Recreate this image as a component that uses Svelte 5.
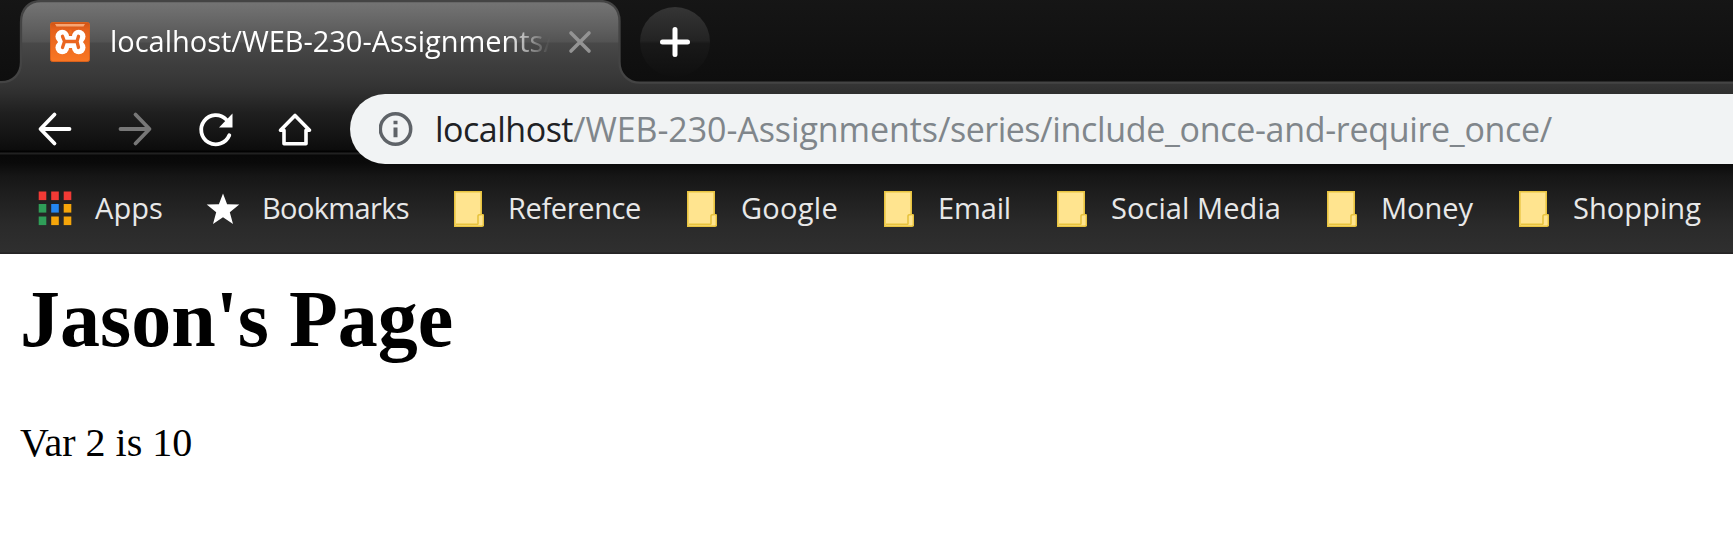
<script>
  const bookmarks = [
    { label: 'Reference', width: 133 },
    { label: 'Google', width: 97 },
    { label: 'Email', width: 73 },
    { label: 'Social Media', width: 170 },
    { label: 'Money', width: 92 },
    { label: 'Shopping', width: 128 },
  ];

  const path = [
    { text: '/WEB-230-Assignments', width: 365 },
    { text: '/series', width: 102 },
    { text: '/include_once-and-require_once/', width: 512 },
  ];

  const squares = ['#f23a35', '#f23a35', '#f23a35', '#2f9e58', '#2486f0', '#f5a50a', '#2f9e58', '#f5a50a', '#f5a50a'];

  // Tracks a label so that it fills the given width.
  function fit(node, width) {
    const natural = node.getBoundingClientRect().width;
    node.style.letterSpacing = `${(width - natural) / node.textContent.length}px`;
  }
</script>

<div class="window">
  <header class="chrome">
    <div class="strip">
      <svg class="strip-shape" width="1733" height="85" viewBox="0 0 1733 85" aria-hidden="true">
        <defs>
          <linearGradient id="dark" x1="0" y1="0" x2="0" y2="1">
            <stop offset="0" stop-color="#161616" />
            <stop offset="1" stop-color="#0e0e0e" />
          </linearGradient>
        </defs>
        <path d="M-4-4V82.200H1C13 82.200 21 74 21 62V22C21 9 29 1 41 1H600C612 1 619.500 9 619.500 21V62C619.500 74 628 82.700 640 82.700H1740V-4Z" fill="url(#dark)" stroke="#444" stroke-width="2.300" />
      </svg>
      <div class="tab">
        <svg class="favicon" width="40" height="40" viewBox="0 0 40 40">
          <defs>
            <linearGradient id="orange" x1="0" y1="0" x2="0" y2="1">
              <stop offset="0" stop-color="#cf5416" />
              <stop offset=".18" stop-color="#e5611c" />
              <stop offset="1" stop-color="#f97724" />
            </linearGradient>
          </defs>
          <rect x=".5" y=".5" width="39" height="39" rx="2" fill="url(#orange)" stroke="#d9611c" />
          <path d="M5 2H35L33.500 4.500H6.500Z" fill="#f7a673" />
          <g fill="#fff">
            <circle cx="12.300" cy="14.500" r="6.800" />
            <circle cx="28.700" cy="14.500" r="6.800" />
            <circle cx="12.300" cy="25.500" r="6.800" />
            <circle cx="28.700" cy="25.500" r="6.800" />
            <path d="M8 14H33V26H8Z" />
          </g>
          <path d="M12.500 14.300L14.500 19.500L12.500 25.500M14.500 19.500H27M28.500 14.300L27 19.500L28.500 25.500" fill="none" stroke="#ea6620" stroke-width="3.300" stroke-linecap="round" stroke-linejoin="round" />
          <path d="M20.500 27.500V31M20.500 9V11.500" stroke="#f07023" stroke-width="2.600" stroke-linecap="round" />
        </svg>
        <div class="title"><span use:fit={444}>localhost/WEB-230-Assignments/</span></div>
        <svg class="close" width="24" height="24" viewBox="0 0 24 24"><path d="M3 3L21 21M21 3L3 21" stroke="#939393" stroke-width="3.600" stroke-linecap="round" /></svg>
      </div>
      <div class="new-tab">
        <svg width="34" height="34" viewBox="0 0 34 34"><path d="M17 4.500V29.500M4.500 17H29.500" stroke="#fff" stroke-width="5" stroke-linecap="round" /></svg>
      </div>
    </div>

    <div class="toolbar">
      <nav class="nav">
        <svg width="40" height="40" viewBox="0 0 40 40"><path d="M19.500 5.500L5.500 20L19.500 34.500M6 20H34.500" class="line" /></svg>
        <svg width="40" height="40" viewBox="0 0 40 40"><path d="M20.500 5.500L34.500 20L20.500 34.500M34 20H5.500" class="line faded" /></svg>
        <svg width="40" height="40" viewBox="0 0 40 40">
          <path d="M34.300 26.300A14.600 14.600 0 1 1 31.200 10.500" class="line" />
          <path d="M37.500 4.500V18.500H24Z" fill="#fff" />
        </svg>
        <svg width="40" height="40" viewBox="0 0 40 40"><path d="M20 6.500L5.500 21.300H9V34.700H31V21.300H34.500Z" fill="none" stroke="#fff" stroke-width="3.600" stroke-linejoin="round" /></svg>
      </nav>
      <div class="omnibox">
        <svg class="info" width="34" height="34" viewBox="0 0 34 34">
          <circle cx="16.500" cy="17" r="15.200" fill="none" stroke="#5f6368" stroke-width="3.500" />
          <path d="M16.500 15.400V25.300M16.500 8.700V12.300" stroke="#5f6368" stroke-width="4" />
        </svg>
        <div class="url"><span class="host" use:fit={138}>localhost</span>{#each path as part}<span use:fit={part.width}>{part.text}</span>{/each}</div>
      </div>
    </div>

    <nav class="bookmarks">
      <div class="item apps">
        <svg width="34" height="36" viewBox="0 0 34 36">
          {#each squares as color, i}
            <rect x={0.7 + (i % 3) * 12.5} y={0.5 + Math.floor(i / 3) * 12.5} width="7.600" height="8.600" fill={color} />
          {/each}
        </svg>
        <span use:fit={68}>Apps</span>
      </div>
      <div class="item starred">
        <svg width="34" height="36" viewBox="0 0 34 36"><path d="M17 2.400L21.100 13.300L33.300 13.600L23.800 21.200L27 33L17 26.300L7 33L10.200 21.200L.7 13.600L12.900 13.300Z" fill="#fff" /></svg>
        <span use:fit={147}>Bookmarks</span>
      </div>
      {#each bookmarks as { label, width }}
        <div class="item">
          <svg width="30" height="36" viewBox="0 0 30 36">
            <path d="M.8.8H27.200V23.500H28Q29.400 23.500 29.400 25V33.500Q29.400 35.200 27.700 35.200H.8Z" fill="#ffe48f" stroke="#e8c33f" stroke-width="1.600" />
            <path d="M24 33.500V25Q24 23.500 27.200 23.500M2 33.200H24" fill="none" stroke="#e8c33f" stroke-width="1.600" />
          </svg>
          <span use:fit={width}>{label}</span>
        </div>
      {/each}
    </nav>
  </header>

  <main>
    <h1>Jason's Page</h1>
    <p>Var 2 is 10</p>
  </main>
</div>

<style>
  :global(body) { background: #fff; overflow: hidden; }
  .window { width: 1733px; height: 555px; overflow: hidden; background: #fff; }
  .chrome {
    height: 254px;
    background: linear-gradient(#747474 0, #727272 5px, #5f5f5f 29px, #535353 42px, #484848 43px, #3d3d3d 66px, #373737 80px, #303030 92px, #202020 112px, #131313 137px, #0c0c0c 150px, #010101 151px, #030303 152px, #222 153px, #202020 154px, #080808 155px, #0a0a0a 163px, #161616 176px, #202020 199px, #2a2a2a 225px, #2f2f2f 252px, #211f20 253px, #2a2829 254px);
    font-family: "Open Sans", "Segoe UI", sans-serif;
    white-space: nowrap;
  }
  svg { display: block; flex: none; }
  .strip { position: relative; display: flex; height: 82px; padding-left: 20px; box-sizing: border-box; }
  .strip-shape { position: absolute; left: 0; top: 0; }
  .tab { position: relative; display: flex; align-items: center; width: 600px; height: 84px; padding-left: 30px; box-sizing: border-box; }
  .title {
    width: 446px; margin-left: 20px; color: #fff; font-size: 29px; line-height: 80px; padding-bottom: 2px;
    -webkit-mask-image: linear-gradient(90deg, #000 395px, transparent 440px);
    mask-image: linear-gradient(90deg, #000 395px, transparent 440px);
  }
  .close { margin-left: 12px; }
  .new-tab {
    position: relative; display: flex; align-items: center; justify-content: center; flex: none;
    width: 70px; height: 70px; margin: 6.5px 0 0 20px; border-radius: 50%;
    background: linear-gradient(#353535, #232323 48%, #191919 52%, #0f0f0f);
  }
  .toolbar { display: flex; height: 82px; padding: 12px 0 0 35px; box-sizing: border-box; }
  .nav { display: flex; align-items: center; gap: 40px; width: 315px; height: 69px; }
  .line { fill: none; stroke: #fff; stroke-width: 3.8; stroke-linecap: round; stroke-linejoin: round; }
  .faded { stroke: #777; }
  .omnibox { display: flex; align-items: center; flex: 1; height: 70px; padding-left: 29px; border-radius: 35px 0 0 35px; background: #f1f3f4; }
  .url { margin-left: 22px; color: #80868b; font-size: 34px; line-height: 70px; }
  .host { color: #202124; }
  .bookmarks { display: flex; align-items: center; height: 90px; padding-left: 38px; box-sizing: border-box; color: #e8e8e8; font-size: 29px; line-height: 86px; }
  .item { display: flex; align-items: center; gap: 24px; margin-right: 46px; flex: none; }
  .item span { padding-bottom: 2px; }
  .apps { gap: 23px; margin-right: 43px; }
  .starred { gap: 22px; margin-right: 45px; }
  main { padding: 19px 20px 0; color: #000; font-family: "Liberation Serif", "Times New Roman", serif; }
  h1 { margin: 0; font-size: 80px; line-height: 92px; }
  p { margin: 55px 0 0; font-size: 40px; line-height: 46px; }
</style>
